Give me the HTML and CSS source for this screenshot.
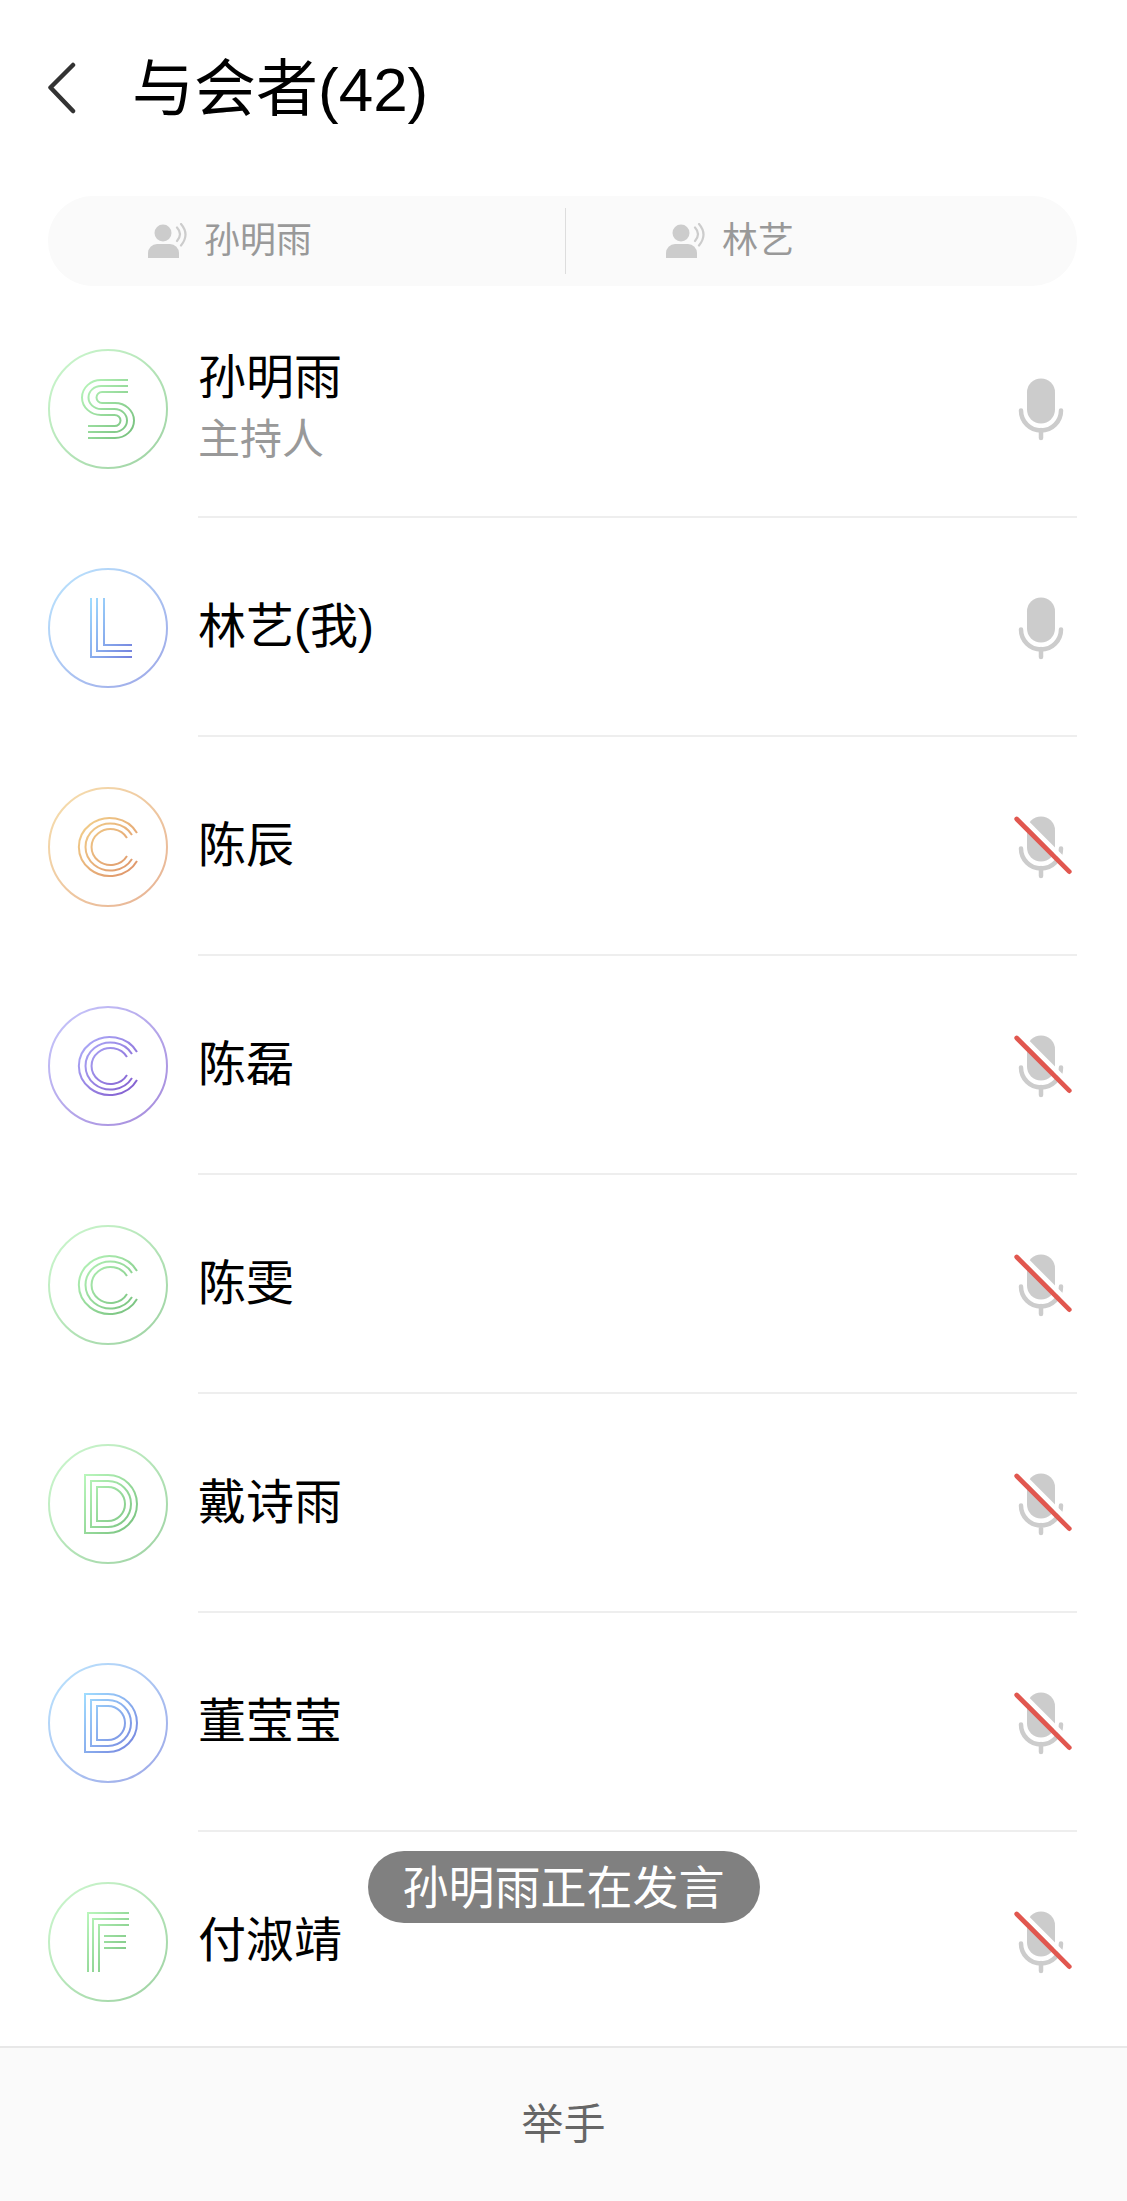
FILE: index.html
```html
<!DOCTYPE html>
<html lang="zh-CN">
<head>
<meta charset="utf-8">
<meta name="viewport" content="width=device-width, initial-scale=1">
<title>与会者</title>
<link rel="stylesheet" href="styles.css">
</head>
<body>
<svg class="defs" aria-hidden="true">
  <defs>
    <linearGradient id="green" x1="0" y1="0" x2="1" y2="1"><stop offset="0" stop-color="#adf5b0"/><stop offset="1" stop-color="#5db465"/></linearGradient>
    <linearGradient id="blue" x1="0" y1="0" x2="1" y2="1"><stop offset="0" stop-color="#8fd6ff"/><stop offset="1" stop-color="#5c6bd8"/></linearGradient>
    <linearGradient id="orange" x1="0" y1="0" x2="1" y2="1"><stop offset="0" stop-color="#f2cc7a"/><stop offset="1" stop-color="#d87f4e"/></linearGradient>
    <linearGradient id="purple" x1="0" y1="0" x2="1" y2="1"><stop offset="0" stop-color="#a3a4fb"/><stop offset="1" stop-color="#6a3cc4"/></linearGradient>
    <symbol id="ring" viewBox="0 0 120 120"><circle cx="60" cy="60" r="59"/></symbol>
    <symbol id="mono-s" viewBox="0 0 120 120"><path d="M80 31H53a19 17.500 0 0 0 0 35H66.500a6 5.500 0 0 1 0 11H40M80 37H53a12.500 11.500 0 0 0 0 23H66.500a12.500 11.500 0 0 1 0 23H40M80 43H54a5.500 5.500 0 0 0 0 11H67a19 17.500 0 0 1 0 35H40"/></symbol>
    <symbol id="mono-l" viewBox="0 0 120 120"><path d="M43 30V89H84M49 30V83H84M56 30V77H84"/></symbol>
    <symbol id="mono-c" viewBox="0 0 120 120"><path d="M89 46A31 29 0 1 0 89 74M84 48A25 23.500 0 1 0 84 72M79 51A19 18 0 1 0 79 69"/></symbol>
    <symbol id="mono-d" viewBox="0 0 120 120"><path d="M37 31H60a29 29 0 0 1 0 58H37zM43 37H60a23 23 0 0 1 0 46H43zM49 43H60a17 17 0 0 1 0 34H49z"/></symbol>
    <symbol id="mono-f" viewBox="0 0 120 120"><path d="M40 90V31H81M45 90V37H81M51 90V43H81M56 54H78M56 60H78M56 66H78"/></symbol>
    <symbol id="speaking" viewBox="0 0 40 36">
      <circle cx="15" cy="10" r="8.500" fill="#ccc"/>
      <path d="M0 35V30a9 9 0 0 1 9-9h13a9 9 0 0 1 9 9v5z" fill="#ccc"/>
      <path d="M29 4.500q6 6.500 0 13.500M33 1q9 10.500 0 21.500" fill="none" stroke="#ccc" stroke-width="2.200" stroke-linecap="round"/>
    </symbol>
    <symbol id="mic" viewBox="0 0 64 64">
      <rect x="14" y="1.500" width="28" height="45" rx="14" fill="#ccc"/>
      <path d="M8 33.500a20 20 0 0 0 40 0M28 53v8" fill="none" stroke="#ccc" stroke-width="4.500" stroke-linecap="round"/>
    </symbol>
    <symbol id="mic-off" viewBox="0 0 64 64">
      <use href="#mic"/>
      <path d="M7 .7l52.600 52.700" stroke="#fff" stroke-width="4.700"/>
      <path d="M3.700 4l52.600 52.700" stroke="#e1574f" stroke-width="4.700" stroke-linecap="round"/>
    </symbol>
  </defs>
</svg>

<div class="app">
  <header class="header">
    <button class="back" type="button" aria-label="返回">
      <svg class="back-icon" viewBox="0 0 28 52" aria-hidden="true"><path d="M25 3L2.500 25.500 25 49" fill="none" stroke="#333" stroke-width="4.500" stroke-linecap="round" stroke-linejoin="round"/></svg>
    </button>
    <h1 class="title">与会者(42)</h1>
  </header>

  <ul class="speakers">
    <li class="speaker"><svg class="speaker-icon" aria-hidden="true"><use href="#speaking"/></svg>孙明雨</li>
    <li class="speaker"><svg class="speaker-icon" aria-hidden="true"><use href="#speaking"/></svg>林艺</li>
  </ul>

  <main class="content">
    <ul class="list">
      <li class="row">
        <svg class="avatar green" aria-hidden="true"><use class="ring" href="#ring"/><use class="mono" href="#mono-s"/></svg>
        <div class="info"><div class="who"><p class="name">孙明雨</p><p class="role">主持人</p></div><svg class="mic" role="img" aria-label="麦克风已开启"><use href="#mic"/></svg></div>
      </li>
      <li class="row">
        <svg class="avatar blue" aria-hidden="true"><use class="ring" href="#ring"/><use class="mono" href="#mono-l"/></svg>
        <div class="info"><div class="who"><p class="name">林艺(我)</p></div><svg class="mic" role="img" aria-label="麦克风已开启"><use href="#mic"/></svg></div>
      </li>
      <li class="row">
        <svg class="avatar orange" aria-hidden="true"><use class="ring" href="#ring"/><use class="mono" href="#mono-c"/></svg>
        <div class="info"><div class="who"><p class="name">陈辰</p></div><svg class="mic" role="img" aria-label="已静音"><use href="#mic-off"/></svg></div>
      </li>
      <li class="row">
        <svg class="avatar purple" aria-hidden="true"><use class="ring" href="#ring"/><use class="mono" href="#mono-c"/></svg>
        <div class="info"><div class="who"><p class="name">陈磊</p></div><svg class="mic" role="img" aria-label="已静音"><use href="#mic-off"/></svg></div>
      </li>
      <li class="row">
        <svg class="avatar green" aria-hidden="true"><use class="ring" href="#ring"/><use class="mono" href="#mono-c"/></svg>
        <div class="info"><div class="who"><p class="name">陈雯</p></div><svg class="mic" role="img" aria-label="已静音"><use href="#mic-off"/></svg></div>
      </li>
      <li class="row">
        <svg class="avatar green" aria-hidden="true"><use class="ring" href="#ring"/><use class="mono" href="#mono-d"/></svg>
        <div class="info"><div class="who"><p class="name">戴诗雨</p></div><svg class="mic" role="img" aria-label="已静音"><use href="#mic-off"/></svg></div>
      </li>
      <li class="row">
        <svg class="avatar blue" aria-hidden="true"><use class="ring" href="#ring"/><use class="mono" href="#mono-d"/></svg>
        <div class="info"><div class="who"><p class="name">董莹莹</p></div><svg class="mic" role="img" aria-label="已静音"><use href="#mic-off"/></svg></div>
      </li>
      <li class="row">
        <svg class="avatar green" aria-hidden="true"><use class="ring" href="#ring"/><use class="mono" href="#mono-f"/></svg>
        <div class="info"><div class="who"><p class="name">付淑靖</p></div><svg class="mic" role="img" aria-label="已静音"><use href="#mic-off"/></svg></div>
      </li>
    </ul>
    <div class="toast" role="status">孙明雨正在发言</div>
  </main>

  <footer class="footer"><button class="raise" type="button">举手</button></footer>
</div>
</body>
</html>
```
FILE: styles.css
```css
* {
  box-sizing: border-box;
  margin: 0;
  padding: 0;
}

body {
  background: #fff;
  color: #000;
  font-family: "Liberation Sans", "Noto Sans CJK SC", sans-serif;
}

ul {
  list-style: none;
}

button {
  border: 0;
  background: none;
  font: inherit;
  cursor: pointer;
}

.defs {
  position: absolute;
  width: 0;
  height: 0;
}

.app {
  display: flex;
  flex-direction: column;
  height: 100vh;
}

.header {
  display: flex;
  align-items: center;
  gap: 56px;
  padding: 40px 48px 60px;
}

.back-icon {
  display: block;
  width: 28px;
  height: 52px;
}

.title {
  padding-top: 4px;
  font-size: 62px;
  font-weight: 400;
  line-height: 92px;
}

.speakers {
  display: grid;
  grid-template-columns: 101fr 100fr;
  flex: none;
  margin: 0 50px 0 48px;
  padding: 12px 0;
  border-radius: 45px;
  background: #fafafa;
}

.speaker {
  display: flex;
  align-items: center;
  gap: 16px;
  padding-left: 100px;
  color: #999;
  font-size: 36px;
  line-height: 66px;
}

.speaker + .speaker {
  border-left: 1px solid #ddd;
}

.speaker-icon {
  width: 40px;
  height: 36px;
}

.content {
  position: relative;
  flex: 1;
  min-height: 0;
}

.list {
  height: 100%;
  padding: 13px 50px 0 48px;
  overflow-y: auto;
  scrollbar-width: none;
}

.row {
  display: flex;
  align-items: center;
  gap: 30px;
}

.avatar {
  flex: none;
  width: 120px;
  height: 120px;
  fill: none;
  stroke-width: 2;
}

.ring {
  opacity: 0.6;
}

.mono {
  opacity: 0.85;
}

.green { stroke: url(#green); }
.blue { stroke: url(#blue); }
.orange { stroke: url(#orange); }
.purple { stroke: url(#purple); }

.info {
  display: flex;
  flex: 1;
  align-items: center;
  justify-content: space-between;
  min-height: 219px;
  padding-top: 2px;
  border-bottom: 2px solid #eee;
}

.who {
  padding-bottom: 2px;
}

.name {
  font-size: 48px;
  line-height: 64px;
}

.role {
  color: #999;
  font-size: 42px;
  line-height: 60px;
}

.mic {
  flex: none;
  width: 64px;
  height: 64px;
}

.toast {
  position: absolute;
  bottom: 123px;
  left: 50%;
  padding: 2px 35px 0;
  border-radius: 36px;
  background: #808080;
  color: #fff;
  font-size: 46px;
  line-height: 70px;
  white-space: nowrap;
  transform: translateX(-50%);
}

.footer {
  flex: none;
  border-top: 2px solid #e8e8e8;
  background: #fafafa;
}

.raise {
  display: block;
  width: 100%;
  color: #666;
  font-size: 42px;
  line-height: 153px;
}
```
